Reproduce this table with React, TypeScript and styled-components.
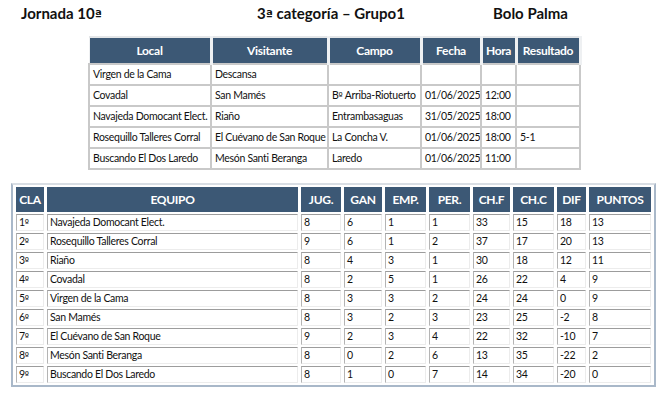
import React from "react";
import styled, { createGlobalStyle } from "styled-components";

const GlobalStyle = createGlobalStyle`
  body {
    margin: 0;
    background: #ffffff;
    font-family: Lato, "Open Sans", Arial, sans-serif;
    color: #111;
  }
`;

const headerBlue = "#3c5875";

const Page = styled.div`
  width: 671px;
  height: 393px;
  overflow: hidden;
`;

const TitleRow = styled.div`
  display: grid;
  grid-template-columns: 236px 236px auto;
  padding: 4px 0 0 21px;
  font-size: 15px;
  line-height: 18px;
  font-weight: 700;
`;

// ordinal marks drawn underlined, as in the source document
const Ord = styled.span`
  font-family: "DejaVu Sans", sans-serif;
  font-size: 0.85em;
  line-height: 0;
  letter-spacing: 0;
`;

const FixturesWrap = styled.div`
  margin: 14px 0 0 88px;
`;

const FixturesTable = styled.table`
  border-collapse: collapse;
  table-layout: fixed;
  width: 491px;
  border-top: 2px solid #e4e6e8;
  font-size: 10.5px;
  letter-spacing: -0.3px;
`;

const FixtureHead = styled.th`
  background: ${headerBlue};
  color: #fff;
  font-weight: 700;
  font-size: 12px;
  height: 25px;
  padding: 0;
  border-right: 3px solid #eef0f2;
  border-left: 1px solid #eef0f2;
  text-align: center;
`;

const FixtureCell = styled.td`
  height: 19px;
  padding: 0 3px;
  line-height: 19px;
  border: 2px solid #c9c9c9;
  white-space: nowrap;
  overflow: hidden;
`;

const StandingsWrap = styled.div`
  margin: 13px 0 0 11px;
`;

const StandingsTable = styled.table`
  border-collapse: separate;
  border-spacing: 3px 2px;
  table-layout: fixed;
  border: 2px solid #a9b8c9;
  border-top-color: #d9dee4;
  font-size: 10.5px;
  letter-spacing: -0.3px;
`;

const StandHead = styled.th<{ $w: number }>`
  box-sizing: border-box;
  width: ${(p) => p.$w}px;
  height: 25px;
  padding: 0;
  background: ${headerBlue};
  color: #fff;
  font-weight: 700;
  font-size: 12px;
  text-align: center;
`;

const StandCell = styled.td`
  box-sizing: border-box;
  height: 17px;
  padding: 0 2px;
  line-height: 15px;
  border: 1px solid #ececec;
  border-top-color: #9c9c9c;
  border-left-color: #b4b4b4;
  white-space: nowrap;
  overflow: hidden;
`;

const fixtureCols = [122, 117, 93, 60, 35, 64];
const fixtureHeads = ["Local", "Visitante", "Campo", "Fecha", "Hora", "Resultado"];
const fixtures = [
  ["Virgen de la Cama", "Descansa", "", "", "", ""],
  ["Covadal", "San Mamés", "Bº Arriba-Riotuerto", "01/06/2025", "12:00", ""],
  ["Navajeda Domocant Elect.", "Riaño", "Entrambasaguas", "31/05/2025", "18:00", ""],
  ["Rosequillo Talleres Corral", "El Cuévano de San Roque", "La Concha V.", "01/06/2025", "18:00", "5-1"],
  ["Buscando El Dos Laredo", "Mesón Santi Beranga", "Laredo", "01/06/2025", "11:00", ""],
];

const standHeads: [string, number][] = [
  ["CLA", 28],
  ["EQUIPO", 251],
  ["JUG.", 40],
  ["GAN", 38],
  ["EMP.", 41],
  ["PER.", 41],
  ["CH.F", 37],
  ["CH.C", 41],
  ["DIF", 29],
  ["PUNTOS", 62],
];

const standings = [
  ["1º", "Navajeda Domocant Elect.", "8", "6", "1", "1", "33", "15", "18", "13"],
  ["2º", "Rosequillo Talleres Corral", "9", "6", "1", "2", "37", "17", "20", "13"],
  ["3º", "Riaño", "8", "4", "3", "1", "30", "18", "12", "11"],
  ["4º", "Covadal", "8", "2", "5", "1", "26", "22", "4", "9"],
  ["5º", "Virgen de la Cama", "8", "3", "3", "2", "24", "24", "0", "9"],
  ["6º", "San Mamés", "8", "3", "2", "3", "23", "25", "-2", "8"],
  ["7º", "El Cuévano de San Roque", "9", "2", "3", "4", "22", "32", "-10", "7"],
  ["8º", "Mesón Santi Beranga", "8", "0", "2", "6", "13", "35", "-22", "2"],
  ["9º", "Buscando El Dos Laredo", "8", "1", "0", "7", "14", "34", "-20", "0"],
];

const withOrd = (text: string) => {
  const parts = text.split(/([ºª])/);
  return parts.map((p, i) => (p === "º" || p === "ª" ? <Ord key={i}>{p}</Ord> : p));
};

export default function App() {
  return (
    <Page>
      <GlobalStyle />
      <TitleRow>
        <span>{withOrd("Jornada 10ª")}</span>
        <span>{withOrd("3ª categoría – Grupo1")}</span>
        <span>Bolo Palma</span>
      </TitleRow>

      <FixturesWrap>
        <FixturesTable>
          <colgroup>
            {fixtureCols.map((w, i) => (
              <col key={i} style={{ width: w }} />
            ))}
          </colgroup>
          <thead>
            <tr>
              {fixtureHeads.map((h) => (
                <FixtureHead key={h}>{h}</FixtureHead>
              ))}
            </tr>
          </thead>
          <tbody>
            {fixtures.map((row, r) => (
              <tr key={r}>
                {row.map((c, i) => (
                  <FixtureCell key={i}>{withOrd(c)}</FixtureCell>
                ))}
              </tr>
            ))}
          </tbody>
        </FixturesTable>
      </FixturesWrap>

      <StandingsWrap>
        <StandingsTable>
          <thead>
            <tr>
              {standHeads.map(([h, w]) => (
                <StandHead key={h} $w={w}>
                  {h}
                </StandHead>
              ))}
            </tr>
          </thead>
          <tbody>
            {standings.map((row, r) => (
              <tr key={r}>
                {row.map((c, i) => (
                  <StandCell key={i}>{withOrd(c)}</StandCell>
                ))}
              </tr>
            ))}
          </tbody>
        </StandingsTable>
      </StandingsWrap>
    </Page>
  );
}
